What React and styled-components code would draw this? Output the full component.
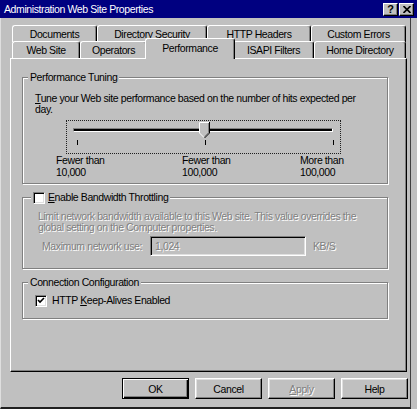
import React from 'react';
import styled, { createGlobalStyle, css } from 'styled-components';

const GlobalStyle = createGlobalStyle`
  html, body { margin: 0; padding: 0; background: #c0c0c0; }
  body {
    font-family: "Liberation Sans", Arial, sans-serif;
    font-size: 10.5px;
    letter-spacing: -0.4px;
    color: #000;
  }
  *, *::before, *::after { box-sizing: border-box; }
`;

const Window = styled.div`
  width: 417px;
  height: 409px;
  background: #c0c0c0;
  display: flex;
  flex-direction: column;
  overflow: hidden;
`;

const TitleBar = styled.div`
  flex: none;
  height: 18px;
  background: #000080;
  color: #fff;
  display: flex;
  align-items: center;
  padding: 0 3px 0 4px;
`;

const TitleText = styled.div`
  flex: 1;
  white-space: nowrap;
  line-height: 18px;
`;

const CaptionButtons = styled.div`
  display: flex;
  gap: 1px;
`;

const CaptionButton = styled.div`
  width: 15px;
  height: 13px;
  background: #c0c0c0;
  border-top: 1px solid #fff;
  border-left: 1px solid #fff;
  border-right: 1px solid #000;
  border-bottom: 1px solid #000;
  box-shadow: inset -1px -1px 0 #808080;
  display: flex;
  align-items: center;
  justify-content: center;
  color: #000;
  font-weight: bold;
  font-size: 11px;
  line-height: 1;
  letter-spacing: 0;
`;

const Body = styled.div`
  flex: 1;
  margin-right: 6px;
  display: flex;
  flex-direction: column;
  padding: 7px 2px 0 9px;
  border-left: 1px solid #dfdfdf;
  border-right: 1px solid #404040;
  border-bottom: 2px solid #202020;
`;

const TabStrip = styled.div`
  margin-left: 2px;
  display: flex;
  flex-direction: column;
  position: relative;
  z-index: 2;
`;

const TabRow = styled.div`
  display: flex;
  height: 17px;
  & + & { margin-top: -1px; }
`;

const Tab = styled.div`
  flex: none;
  width: ${p => p.$w}px;
  height: 17px;
  display: flex;
  align-items: center;
  justify-content: center;
  padding-bottom: 1px;
  background: #c0c0c0;
  white-space: nowrap;
  position: relative;
  border-top: 1px solid #fff;
  border-left: 1px solid #fff;
  border-right: 1px solid #000;
  box-shadow: inset -1px 0 0 #808080;
  border-radius: 3px 3px 0 0;
  ${p => p.$active && css`
    width: ${p.$w + 4}px;
    height: 21px;
    margin: -3px -2px 0;
    z-index: 3;
    padding-bottom: 3px;
  `}
`;

const Panel = styled.div`
  flex: none;
  width: 397px;
  height: 314px;
  position: relative;
  z-index: 1;
  border-top: 1px solid #fff;
  border-left: 1px solid #fff;
  border-right: 1px solid #000;
  border-bottom: 1px solid #000;
  box-shadow: inset -1px -1px 0 #808080;
  padding: 18px 0 0 11px;
  display: flex;
  flex-direction: column;
  gap: 13px;
`;

const GroupBox = styled.div`
  flex: none;
  width: 366px;
  height: ${p => p.$h}px;
  border: 1px solid #808080;
  box-shadow: 1px 1px 0 #fff, inset 1px 1px 0 #fff;
  display: flex;
  flex-direction: column;
  align-items: flex-start;
`;

const GroupLabel = styled.div`
  margin: -7px 0 0 5px;
  padding: 0 2px;
  height: 12px;
  line-height: 12px;
  background: #c0c0c0;
  white-space: nowrap;
`;

const CheckLabel = styled.label`
  display: flex;
  align-items: center;
  gap: ${p => p.$gap}px;
  margin: ${p => p.$m};
  padding: ${p => (p.$legend ? '0 2px' : '0')};
  height: 13px;
  line-height: 13px;
  background: #c0c0c0;
  white-space: nowrap;
`;

const Box = styled.span`
  flex: none;
  width: 12px;
  height: 12px;
  background: #fff;
  border-top: 1px solid #808080;
  border-left: 1px solid #808080;
  border-right: 1px solid #fff;
  border-bottom: 1px solid #fff;
  box-shadow: inset 1px 1px 0 #000, inset -1px -1px 0 #dfdfdf;
  display: flex;
  align-items: center;
  justify-content: center;
`;

const U = styled.span`
  text-decoration: underline;
`;

const Paragraph = styled.div`
  margin: ${p => p.$m};
  line-height: 11px;
  white-space: nowrap;
  ${p => p.$disabled && css`
    color: #808080;
    text-shadow: 1px 1px 0 #fff;
  `}
`;

const SliderBox = styled.div`
  margin: 5px 0 0 43px;
  width: 275px;
  height: 34px;
  border: 1px dotted #202020;
  position: relative;
  display: flex;
  flex-direction: column;
`;

const Track = styled.div`
  margin: 7px 0 0 6px;
  width: 260px;
  height: 4px;
  border-top: 1px solid #808080;
  border-left: 1px solid #808080;
  border-right: 1px solid #fff;
  border-bottom: 1px solid #fff;
  background: #000;
`;

const Thumb = styled.svg`
  position: absolute;
  left: 132px;
  top: 1px;
`;

const Ticks = styled.div`
  margin: 8px 0 0 10px;
  width: 257px;
  display: flex;
  justify-content: space-between;
`;

const TickMark = styled.span`
  width: 1px;
  height: 5px;
  background: #000;
`;

const ScaleLabels = styled.div`
  margin-left: 33px;
  display: grid;
  grid-template-columns: 126px 118px auto;
  line-height: 12px;
`;

const FieldRow = styled.div`
  margin: 3px 0 0 19px;
  display: flex;
  align-items: center;
  color: #808080;
  text-shadow: 1px 1px 0 #fff;
`;

const FieldLabel = styled.span`
  width: 108px;
  white-space: nowrap;
`;

const TextField = styled.div`
  width: 156px;
  height: 20px;
  background: #c0c0c0;
  border-top: 1px solid #808080;
  border-left: 1px solid #808080;
  border-right: 1px solid #fff;
  border-bottom: 1px solid #fff;
  box-shadow: inset 1px 1px 0 #000, inset -1px -1px 0 #dfdfdf;
  padding-left: 4px;
  display: flex;
  align-items: center;
`;

const Unit = styled.span`
  margin-left: 7px;
`;

const ButtonRow = styled.div`
  margin-top: 6px;
  display: flex;
  justify-content: flex-end;
  gap: 6px;
`;

const Button = styled.div`
  width: 67px;
  height: 21px;
  display: flex;
  align-items: center;
  justify-content: center;
  background: #c0c0c0;
  border-top: 1px solid #fff;
  border-left: 1px solid #fff;
  border-right: 1px solid #000;
  border-bottom: 1px solid #000;
  box-shadow: inset -1px -1px 0 #808080, inset 1px 1px 0 #dfdfdf;
  ${p => p.$default && css`
    border: 1px solid #000;
    box-shadow: inset 1px 1px 0 #fff, inset -1px -1px 0 #000, inset -2px -2px 0 #808080;
  `}
  ${p => p.$disabled && css`
    color: #808080;
    text-shadow: 1px 1px 0 #fff;
  `}
`;

const CheckMark = () => (
  <svg width="8" height="7" viewBox="0 0 8 7">
    <path d="M1 3 L3 5 L7 1" stroke="#000" strokeWidth="1.6" fill="none" />
  </svg>
);

const CloseGlyph = () => (
  <svg width="8" height="7" viewBox="0 0 8 7">
    <path d="M0.5 0 L7.5 7 M7.5 0 L0.5 7" stroke="#000" strokeWidth="1.6" />
  </svg>
);

const row1 = [
  ['Documents', 85],
  ['Directory Security', 110],
  ['HTTP Headers', 104],
  ['Custom Errors', 95],
];

const row2 = [
  ['Web Site', 68],
  ['Operators', 67],
  ['Performance', 86, true],
  ['ISAPI Filters', 81],
  ['Home Directory', 92],
];

export default function App() {
  return (
    <>
      <GlobalStyle />
      <Window>
        <TitleBar>
          <TitleText>Administration Web Site Properties</TitleText>
          <CaptionButtons>
            <CaptionButton>?</CaptionButton>
            <CaptionButton><CloseGlyph /></CaptionButton>
          </CaptionButtons>
        </TitleBar>
        <Body>
          <TabStrip>
            <TabRow>
              {row1.map(([t, w]) => <Tab key={t} $w={w}>{t}</Tab>)}
            </TabRow>
            <TabRow>
              {row2.map(([t, w, a]) => <Tab key={t} $w={w} $active={a}>{t}</Tab>)}
            </TabRow>
          </TabStrip>
          <Panel>
            <GroupBox $h={107}>
              <GroupLabel>Performance Tuning</GroupLabel>
              <Paragraph $m="10px 0 0 12px">
                <U>T</U>une your Web site performance based on the number of hits expected per<br />day.
              </Paragraph>
              <SliderBox>
                <Track />
                <Thumb width="11" height="17" viewBox="0 0 11 17">
                  <path d="M0 0 H11 V11 L5.5 16.5 L0 11 Z" fill="#c0c0c0" />
                  <path d="M0.5 11 V0.5 H10" stroke="#fff" fill="none" />
                  <path d="M0.5 11 L5.2 15.7" stroke="#fff" fill="none" />
                  <path d="M10.5 0 V11 L5.5 16" stroke="#000" fill="none" />
                  <path d="M9.5 1 V10.6 L5.5 14.6" stroke="#808080" fill="none" />
                </Thumb>
                <Ticks>
                  <TickMark />
                  <TickMark />
                  <TickMark />
                </Ticks>
              </SliderBox>
              <ScaleLabels>
                <div>Fewer than<br />10,000</div>
                <div>Fewer than<br />100,000</div>
                <div>More than<br />100,000</div>
              </ScaleLabels>
            </GroupBox>

            <GroupBox $h={72}>
              <CheckLabel $legend $gap={3} $m="-7px 0 0 8px">
                <Box />
                <span><U>E</U>nable Bandwidth Throttling</span>
              </CheckLabel>
              <Paragraph $disabled $m="7px 0 0 15px">
                Limit network bandwidth available to this Web site. This value overrides the<br />
                global setting on the Computer properties.
              </Paragraph>
              <FieldRow>
                <FieldLabel>Maximum network use:</FieldLabel>
                <TextField>1,024</TextField>
                <Unit>KB/S</Unit>
              </FieldRow>
            </GroupBox>

            <GroupBox $h={37}>
              <GroupLabel>Connection Configuration</GroupLabel>
              <CheckLabel $gap={5} $m="6px 0 0 12px">
                <Box><CheckMark /></Box>
                <span>HTTP <U>K</U>eep-Alives Enabled</span>
              </CheckLabel>
            </GroupBox>
          </Panel>
          <ButtonRow>
            <Button $default>OK</Button>
            <Button>Cancel</Button>
            <Button $disabled><U>A</U>pply</Button>
            <Button>Help</Button>
          </ButtonRow>
        </Body>
      </Window>
    </>
  );
}
